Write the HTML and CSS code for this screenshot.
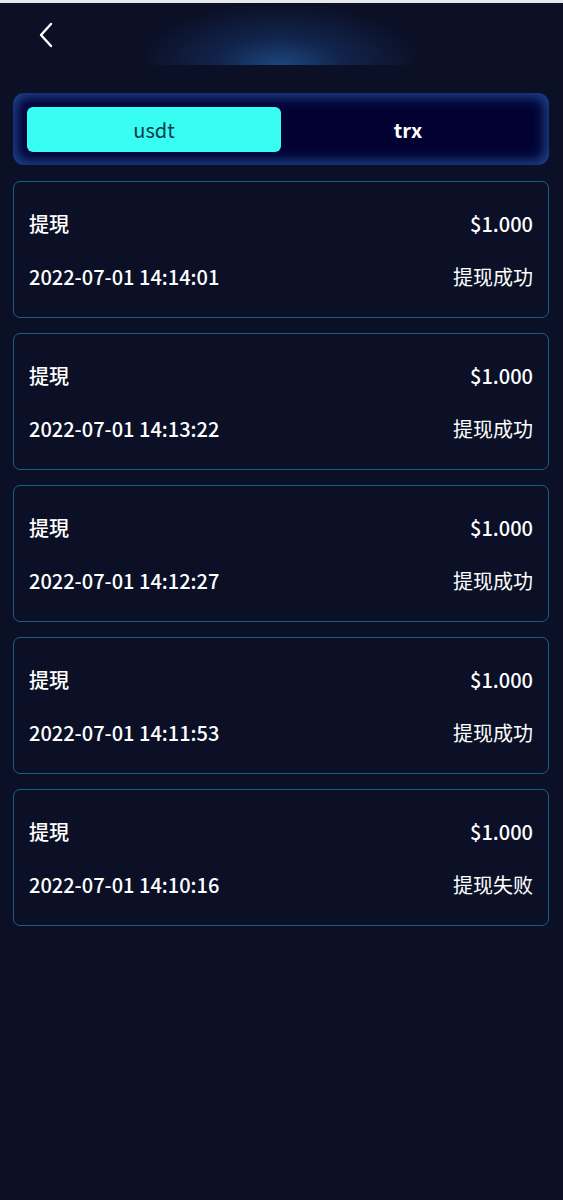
FILE: index.html
```html
<!DOCTYPE html>
<html>
<head>
<meta charset="utf-8">
<link rel="stylesheet" href="styles.css">
</head>
<body>
<div class="topline"></div>
<header class="header">
  <div class="back">
    <svg width="18" height="26" viewBox="0 0 18 26"><path d="M14 2 L4 13 L14 24" fill="none" stroke="#ffffff" stroke-width="2.4" stroke-linecap="round" stroke-linejoin="round"/></svg>
  </div>
  <div class="glow"></div>
</header>
<main class="main">
  <div class="tabs">
    <div class="tab active">usdt</div>
    <div class="tab">trx</div>
  </div>
  <div class="list">
    <div class="card">
      <div class="row"><span class="title">提現</span><span class="amount">$1.000</span></div>
      <div class="row"><span class="date">2022-07-01 14:14:01</span><span class="status">提现成功</span></div>
    </div>
    <div class="card">
      <div class="row"><span class="title">提現</span><span class="amount">$1.000</span></div>
      <div class="row"><span class="date">2022-07-01 14:13:22</span><span class="status">提现成功</span></div>
    </div>
    <div class="card">
      <div class="row"><span class="title">提現</span><span class="amount">$1.000</span></div>
      <div class="row"><span class="date">2022-07-01 14:12:27</span><span class="status">提现成功</span></div>
    </div>
    <div class="card">
      <div class="row"><span class="title">提現</span><span class="amount">$1.000</span></div>
      <div class="row"><span class="date">2022-07-01 14:11:53</span><span class="status">提现成功</span></div>
    </div>
    <div class="card">
      <div class="row"><span class="title">提現</span><span class="amount">$1.000</span></div>
      <div class="row"><span class="date">2022-07-01 14:10:16</span><span class="status">提现失败</span></div>
    </div>
  </div>
</main>
</body>
</html>
```
FILE: styles.css
```css
html, body {
  margin: 0;
  padding: 0;
  background: #0b1027;
  min-height: 100%;
}
body {
  font-family: "Noto Sans CJK SC", "Noto Sans", sans-serif;
  color: #ffffff;
  min-height: 1200px;
}
.topline {
  height: 3px;
  background: #e6e7ea;
}
.header {
  height: 62px;
  position: relative;
  display: flex;
  align-items: flex-start;
}
.back {
  padding: 19px 0 0 37px;
  position: relative;
  z-index: 1;
}
.back svg { display: block; }
.glow {
  position: absolute;
  left: 140px;
  width: 280px;
  top: 0;
  height: 62px;
  background: radial-gradient(ellipse 50% 100% at 50% 100%, rgba(30,76,136,0.9) 0%, rgba(22,52,104,0.55) 45%, rgba(11,16,39,0) 100%);
}
.main {
  padding: 28px 14px 0 13px;
}
.tabs {
  background: #020232;
  border-radius: 11px;
  box-shadow: inset 0 0 14px 3px rgba(38,86,168,0.9);
  padding: 14px 14px 13px 14px;
  display: flex;
  height: 45px;
}
.tab {
  flex: 1;
  display: flex;
  align-items: center;
  justify-content: center;
  font-size: 20px;
  font-weight: 700;
  color: #ffffff;
}
.tab.active {
  background: #38fdf3;
  color: #0b3a48;
  font-weight: 400;
  border-radius: 6px;
}
.list {
  display: flex;
  flex-direction: column;
  gap: 15px;
  margin-top: 16px;
}
.card {
  border: 1px solid #1c5b88;
  border-radius: 7px;
  height: 135px;
  box-sizing: content-box;
  padding: 0 15px;
  display: flex;
  flex-direction: column;
  justify-content: center;
  gap: 20px;
}
.row {
  display: flex;
  justify-content: space-between;
  align-items: center;
  height: 33px;
  font-size: 20px;
  line-height: 33px;
}
.title { font-weight: 500; }
.amount { font-weight: 500; }
.date { font-weight: 500; }
.status { font-weight: 400; }
```
